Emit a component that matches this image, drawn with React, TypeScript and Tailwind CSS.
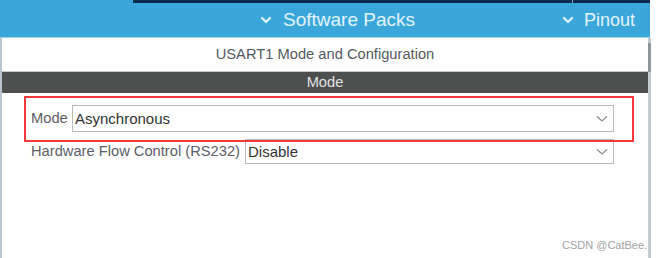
import { ChevronDown } from "lucide-react";

function Select({ value, className }: { value: string; className: string }) {
  return (
    <div
      className={`flex items-center justify-between h-full border border-[#b7bbbf] bg-white pl-[2px] pr-[5px] ${className}`}
    >
      <span className="text-[15px] text-[#333] leading-none">{value}</span>
      <svg width="12" height="8" viewBox="0 0 12 8" className="mt-[1px]">
        <path d="M1 1.5 L6 6 L11 1.5" fill="none" stroke="#8a8f94" strokeWidth="1.3" />
      </svg>
    </div>
  );
}

export default function App() {
  return (
    <div className="w-[660px] h-[258px] bg-white overflow-hidden font-['Liberation_Sans',Arial,sans-serif] relative">
      {/* Top toolbar */}
      <div className="w-[650px]">
        <div className="flex h-[3px] bg-[#3aa7da]">
          <div className="w-[133px]" />
          <div className="flex-1 bg-[#0b2a4e] flex">
            <div className="w-[439px]" />
            <div className="w-[1px] bg-[#8ea3b8]" />
          </div>
        </div>
        <div className="h-[34px] bg-[#3aa7da] flex items-center text-[#e4f3fb] text-[18px] whitespace-nowrap">
          <div className="w-[258px] shrink-0" />
          <ChevronDown className="w-[16px] h-[16px] shrink-0" strokeWidth={3.2} />
          <span className="ml-[9px] w-[277px] shrink-0 text-[19px]">Software Packs</span>
          <ChevronDown className="w-[16px] h-[16px] shrink-0" strokeWidth={3.2} />
          <span className="ml-[8px]">Pinout</span>
        </div>
        <div className="h-[1px] bg-[#9fd3ee]" />
      </div>

      {/* Panel */}
      <div className="w-[651px] h-[220px] flex border-l-2 border-[#b9c4cc]">
        <div className="flex-1 flex flex-col">
          <div className="h-[33px] flex items-center justify-center text-[14.7px] text-[#555a5f]">
            USART1 Mode and Configuration
          </div>
          <div className="h-[1px] bg-[#c9c9c9]" />
          <div className="h-[21px] bg-[#4e4f4f] flex items-center justify-center text-[14.7px] text-[#e3e3e3]">
            Mode
          </div>
          <div className="flex flex-col gap-[7px] pt-[12px] pl-[29px] pr-[34px] text-[14.7px] text-[#5a6068]">
            <div className="flex items-center h-[27px]">
              <span className="w-[41px] shrink-0">Mode</span>
              <Select value="Asynchronous" className="flex-1" />
            </div>
            <div className="flex items-center h-[25px]">
              <span className="w-[214px] shrink-0 whitespace-nowrap">Hardware Flow Control (RS232)</span>
              <Select value="Disable" className="flex-1" />
            </div>
          </div>
        </div>
        <div className="w-[3px] bg-[#c3cbd2] flex flex-col">
          <div className="h-[5px]" />
          <div className="h-[29px] bg-[#8f969c]" />
        </div>
      </div>

      {/* Annotation box */}
      <div className="absolute left-[24px] top-[96px] w-[610px] h-[46px] border-2 border-[#f23a3a]" />

      {/* Watermark */}
      <div className="absolute left-[562px] top-[237px] text-[11px] text-[#a2a2a2] whitespace-nowrap">
        CSDN @CatBee.
      </div>
    </div>
  );
}
